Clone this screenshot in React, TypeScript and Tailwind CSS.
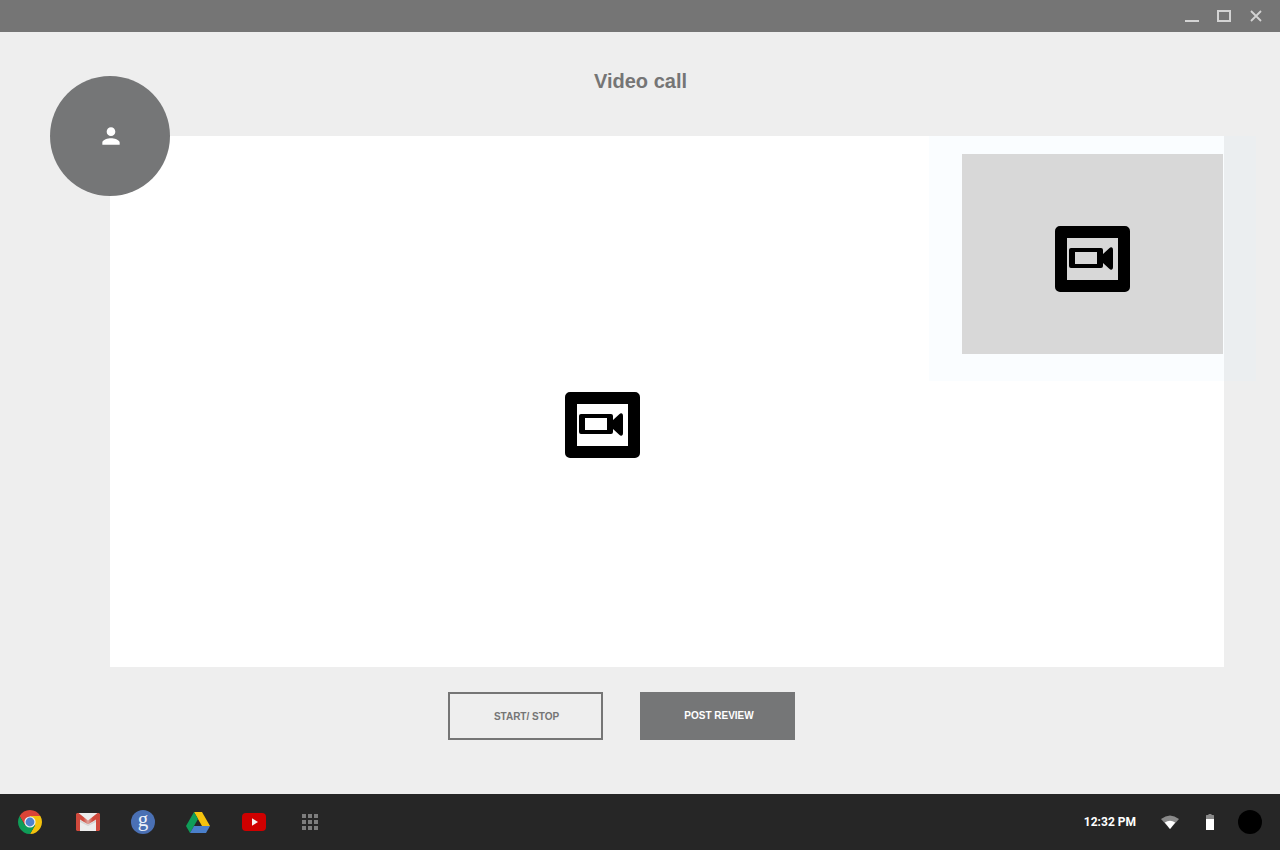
import React from "react";

const sans = "font-['Liberation_Sans',Arial,sans-serif]";

function VideoIcon() {
  return (
    <svg width="75" height="66" viewBox="0 0 75 66" className="block shrink-0">
      <path
        fillRule="evenodd"
        d="M5 0H70A5 5 0 0 1 75 5V61A5 5 0 0 1 70 66H5A5 5 0 0 1 0 61V5A5 5 0 0 1 5 0ZM12 12V54H63V12Z"
        fill="#000"
      />
      <path
        fillRule="evenodd"
        d="M16 22H46A2 2 0 0 1 48 24V28L54 22.5C56 20.5 58 21 58 24V41C58 44 56 44.5 54 42.5L48 37V40A2 2 0 0 1 46 42H16A2 2 0 0 1 14 40V24A2 2 0 0 1 16 22ZM20 26V38H42V26Z"
        fill="#000"
      />
    </svg>
  );
}

function Chrome() {
  return (
    <svg width="24" height="24" viewBox="0 0 24 24" className="block">
      <path d="M12 12L6.8 15L1.61 6A12 12 0 0 1 22.39 6L12 6Z" fill="#db4437" />
      <path d="M12 12L12 6L22.39 6A12 12 0 0 1 12 24L17.2 15Z" fill="#f4c20d" />
      <path d="M12 12L17.2 15L12 24A12 12 0 0 1 1.61 6L6.8 15Z" fill="#0f9d58" />
      <circle cx="12" cy="12" r="5.6" fill="#f1f1f1" />
      <circle cx="12" cy="12" r="4.4" fill="#4f82cf" />
    </svg>
  );
}

function Gmail() {
  return (
    <svg width="24" height="18" viewBox="0 0 24 18" className="block">
      <defs>
        <linearGradient id="gmailV" x1="0" y1="0" x2="1" y2="0">
          <stop offset="0" stopColor="#d0493c" />
          <stop offset="0.3" stopColor="#d0493c" />
          <stop offset="0.5" stopColor="#dca39c" />
          <stop offset="0.7" stopColor="#d0493c" />
          <stop offset="1" stopColor="#d0493c" />
        </linearGradient>
      </defs>
      <rect x="2" y="0" width="20" height="18" fill="#ececec" />
      <path d="M4 9L12 13L20 9V7L12 12L4 7Z" fill="#d4d4d4" />
      <path d="M0 1L1 0H2.5L12 7.5L21.5 0H23L24 1V17L23 18H20V6.5L12 11.5L4 6.5V18H1L0 17Z" fill="url(#gmailV)" />
    </svg>
  );
}

function Drive() {
  return (
    <svg width="24" height="21" viewBox="0 0 24 21" className="block">
      <path d="M8 0H16L24 14H16Z" fill="#f4c20d" />
      <path d="M8 0L0 14L4 21L12 7Z" fill="#0f9d58" />
      <path d="M8 14H24L20 21H4Z" fill="#4a7fcb" />
    </svg>
  );
}

function YouTube() {
  return (
    <svg width="24" height="18" viewBox="0 0 24 18" className="block">
      <rect width="24" height="18" rx="4" fill="#cf0000" />
      <path d="M10 5.2L16 9L10 12.8Z" fill="#f3f3f3" />
    </svg>
  );
}

function Grid() {
  return (
    <svg width="16" height="16" viewBox="0 0 16 16" className="block" fill="#7d7d7d">
      <rect x="0" y="0" width="4" height="4" />
      <rect x="6" y="0" width="4" height="4" />
      <rect x="12" y="0" width="4" height="4" />
      <rect x="0" y="6" width="4" height="4" />
      <rect x="6" y="6" width="4" height="4" />
      <rect x="12" y="6" width="4" height="4" />
      <rect x="0" y="12" width="4" height="4" />
      <rect x="6" y="12" width="4" height="4" />
      <rect x="12" y="12" width="4" height="4" />
    </svg>
  );
}

export default function App() {
  return (
    <div className={`flex h-[850px] w-[1280px] flex-col overflow-hidden bg-[#eeeeee] ${sans}`}>
      <header className="flex h-8 shrink-0 items-start justify-end bg-[#757575] pr-[18px] pt-[10px]">
        <svg width="14" height="12" viewBox="0 0 14 12" className="block">
          <rect x="0" y="10" width="14" height="2" fill="#d3d3d3" />
        </svg>
        <svg width="14" height="12" viewBox="0 0 14 12" className="ml-[18px] block">
          <rect x="1" y="1" width="12" height="10" fill="none" stroke="#d3d3d3" strokeWidth="2" />
        </svg>
        <svg width="12" height="12" viewBox="0 0 12 12" className="ml-[19px] block">
          <path d="M1 1L11 11M11 1L1 11" stroke="#d3d3d3" strokeWidth="1.8" fill="none" />
        </svg>
      </header>

      <main className="relative flex-1">
        <h1 className="h-[104px] pl-px pt-[37px] text-center text-[20px] font-bold leading-6 text-[#757575]">
          Video call
        </h1>

        <div className="absolute left-[50px] top-[44px] z-10 flex h-[120px] w-[120px] items-center justify-center rounded-full bg-[#757677] pl-px">
          <svg width="26" height="26" viewBox="0 0 24 24" fill="#fff" className="block">
            <path d="M12 12c2.21 0 4-1.79 4-4s-1.79-4-4-4-4 1.79-4 4 1.79 4 4 4zm0 2c-2.67 0-8 1.34-8 4v2h16v-2c0-2.66-5.33-4-8-4z" />
          </svg>
        </div>

        <section className="relative ml-[110px] h-[531px] w-[1114px] bg-white pl-[455px] pt-[256px]">
          <VideoIcon />
          <div className="absolute -right-8 top-0 h-[245px] w-[327px] bg-[#dcecff]/[0.13] pl-[33px] pt-[18px]">
            <div className="flex h-[200px] w-[261px] justify-center bg-[#d8d8d8] pt-[72px]">
              <VideoIcon />
            </div>
          </div>
        </section>

        <div className="flex gap-[37px] pl-[448px] pt-[25px]">
          <button className="flex h-12 w-[155px] items-center justify-center border-2 border-[#757575] pl-0.5 pt-px text-[10px] font-bold text-[#757575]">
            START/ STOP
          </button>
          <button className="flex h-12 w-[155px] items-center justify-center bg-[#757677] pb-px pl-[3px] text-[10px] font-bold text-white">
            POST REVIEW
          </button>
        </div>
      </main>

      <footer className="flex h-14 shrink-0 items-center bg-[#262626] pl-[18px] pr-[18px]">
        <Chrome />
        <div className="ml-[34px]">
          <Gmail />
        </div>
        <div className="ml-[31px] flex h-6 w-6 items-center justify-center rounded-full bg-[#4a70b4] font-['Liberation_Serif',serif] text-[21px] leading-none text-[#eef2fa]">
          <span className="-mt-1.5">g</span>
        </div>
        <div className="ml-[31px]">
          <Drive />
        </div>
        <div className="ml-8">
          <YouTube />
        </div>
        <div className="ml-9">
          <Grid />
        </div>

        <span className="ml-auto font-['Roboto',sans-serif] text-[12px] font-bold text-white">12:32 PM</span>
        <svg width="18" height="14" viewBox="0 0 18 14" className="ml-[25px] block">
          <path d="M0 4Q9 -3 18 4L9 14Z" fill="#8a8a8a" />
          <path d="M3.8 7.6Q9 4 14.2 7.6L9 14Z" fill="#fff" />
        </svg>
        <svg width="8" height="16" viewBox="0 0 8 16" className="ml-[27px] block">
          <path d="M2.5 0H5.5V1H7.5L8 1.5V5H0V1.5L0.5 1H2.5Z" fill="#8a8a8a" />
          <rect x="0" y="5" width="8" height="11" fill="#fff" />
        </svg>
        <div className="ml-6 h-6 w-6 rounded-full bg-black" />
      </footer>
    </div>
  );
}
